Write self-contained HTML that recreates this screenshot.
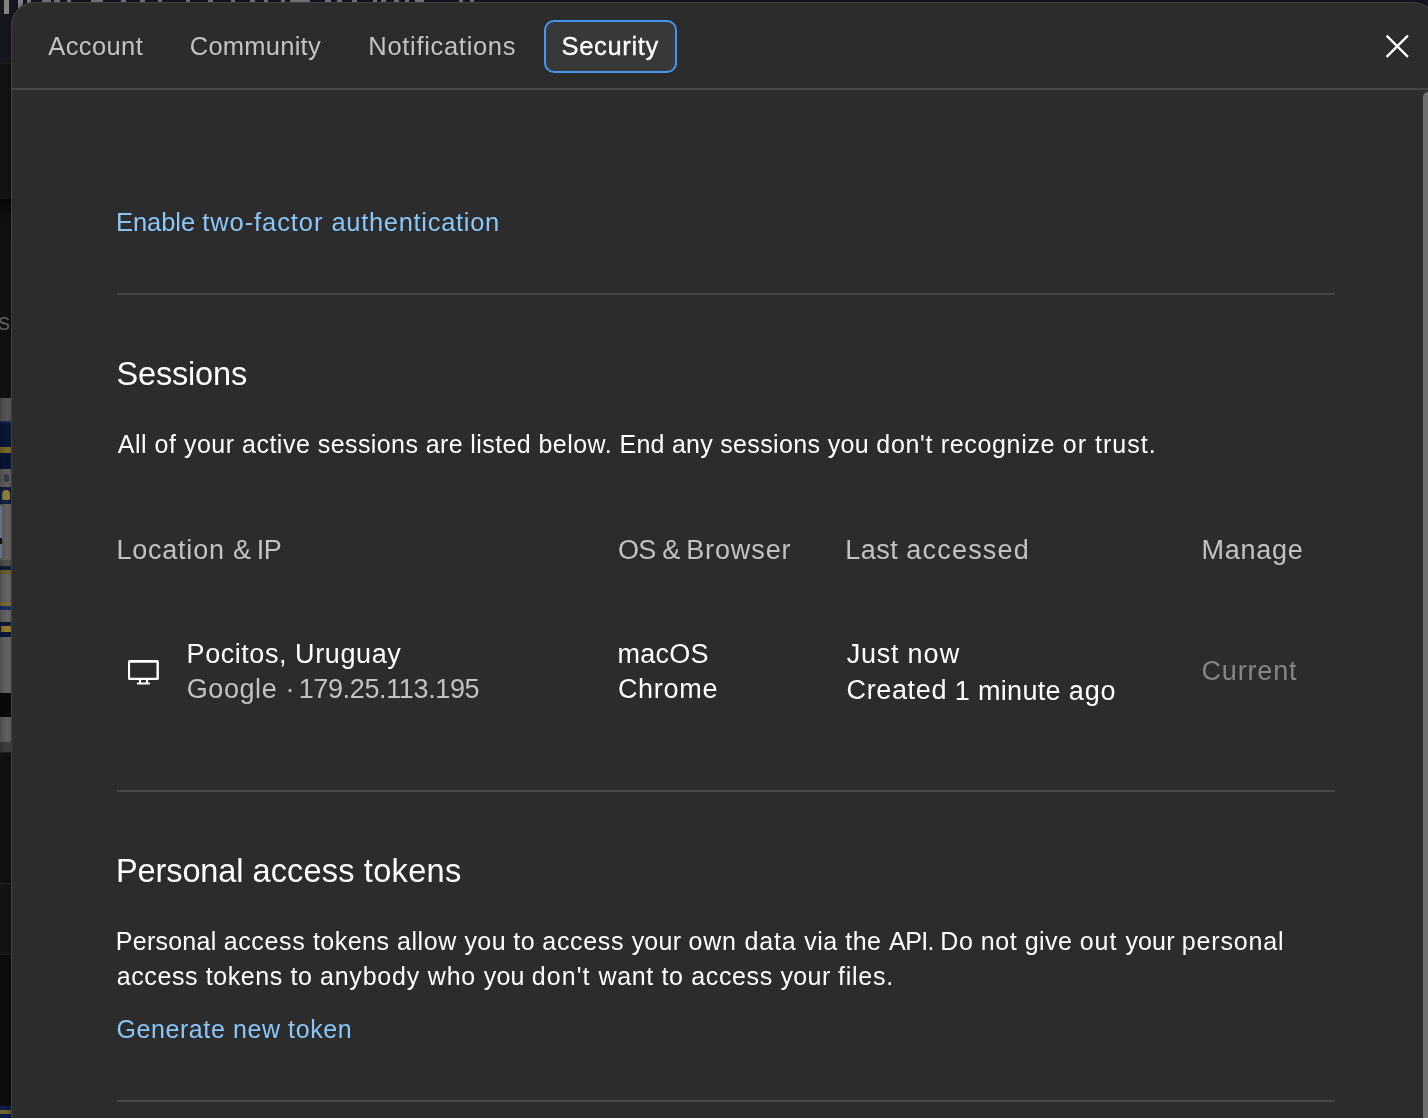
<!DOCTYPE html>
<html lang="en"><head><meta charset="utf-8"><title>Settings – Security</title>
<style>
html,body{margin:0;padding:0;background:#15161f;}
body{width:1428px;height:1118px;position:relative;overflow:hidden;font-family:"Liberation Sans", sans-serif;}
#txt{position:absolute;left:0;top:0;width:1428px;height:1118px;will-change:transform;}
.x{position:absolute;white-space:pre;line-height:1;font-kerning:normal;}
#strip{position:absolute;left:0;top:0;width:12px;height:1118px;overflow:hidden;}
#strip i{position:absolute;left:0;width:12px;display:block;}
#strip:after{content:"";position:absolute;left:0;top:398px;width:12px;height:354px;background:linear-gradient(90deg,rgba(0,0,0,.28),rgba(0,0,0,0) 80%);}
#topfr{position:absolute;left:0;top:0;width:1428px;height:16px;overflow:hidden;}
#topfr i{position:absolute;top:0;display:block;background:#838383;}
#sfrag{position:absolute;left:-1.8px;top:310.3px;font-size:24.5px;line-height:1;color:#5e5e5e;will-change:transform;}
#modal{position:absolute;left:11px;top:2px;width:1426px;height:1140px;background:#2c2c2c;border-radius:24px;box-shadow:0 0 0 1px #424242 inset,0 0 5px rgba(0,0,0,.45);}
.hr{position:absolute;height:2px;background:#464646;}
#tabsel{position:absolute;left:544px;top:20px;width:133px;height:53px;box-sizing:border-box;border:2px solid #4496f5;border-radius:10px;background:#383838;}
#thumb{position:absolute;left:1423px;top:92px;width:10px;height:1040px;background:#6f6f6f;border-radius:5px 0 0 0;}
svg{position:absolute;overflow:visible;}

</style></head>
<body>
<div id="strip">
<i style="top:0px;height:63px;background:#16171e"></i>
<i style="top:63px;height:1px;background:#202020"></i>
<i style="top:64px;height:134px;background:#121212"></i>
<i style="top:198px;height:1px;background:#181818"></i>
<i style="top:199px;height:199px;background:linear-gradient(#070707,#101010 18px,#111111 40px)"></i>
<i style="top:398px;height:23px;background:#5e5e5e"></i>
<i style="top:421px;height:2px;background:#1a2f60"></i>
<i style="top:423px;height:24px;background:#0b1a42"></i>
<i style="top:447px;height:6px;background:#87732a"></i>
<i style="top:453px;height:16px;background:#0a173d"></i>
<i style="top:469px;height:18px;background:#676767"></i>
<i style="top:487px;height:17px;background:#14224a"></i>
<i style="top:504px;height:56px;background:#6c6c6c"></i>
<i style="top:560px;height:6px;background:#5a5a5a"></i>
<i style="top:566px;height:4px;background:#12204a"></i>
<i style="top:570px;height:4px;background:#7a6a30"></i>
<i style="top:574px;height:28px;background:#707070"></i>
<i style="top:602px;height:4px;background:#857838"></i>
<i style="top:606px;height:4px;background:#1c3672"></i>
<i style="top:610px;height:12px;background:#6e6e6e"></i>
<i style="top:622px;height:15px;background:#0d1a44"></i>
<i style="top:637px;height:56px;background:#6d6d6d"></i>
<i style="top:693px;height:24px;background:#0b0b0b"></i>
<i style="top:717px;height:25px;background:#696969"></i>
<i style="top:742px;height:10px;background:#454545"></i>
<i style="top:752px;height:1px;background:#1c1c1c"></i>
<i style="top:753px;height:130px;background:#111111"></i>
<i style="top:883px;height:1px;background:#232323"></i>
<i style="top:884px;height:70px;background:#141414"></i>
<i style="top:954px;height:1px;background:#202020"></i>
<i style="top:955px;height:151px;background:#0c0c0c"></i>
<i style="top:1106px;height:12px;background:#0c1c44"></i>
<i style="top:626px;height:6px;left:1px;width:11px;background:#a88a2c"></i>
<i style="top:1110px;height:4px;left:0;width:12px;background:#6f6434"></i>
<i style="top:474px;height:8px;left:4px;width:5px;background:#3a3f55;border-radius:3px"></i>
<i style="top:490px;height:10px;left:2px;width:8px;background:#9b8a45;border-radius:5px 5px 2px 2px"></i>
<i style="top:506px;height:52px;left:0;width:2px;background:#8d9ab2"></i>
<i style="top:538px;height:6px;left:0;width:2px;background:#151515"></i>
</div>
<div id="topfr">
<i style="left:4.0px;width:4.9px;height:14px"></i>
<i style="left:18.0px;width:4.6px;height:14px"></i>
<i style="left:26.8px;width:4.7px;height:14px"></i>
<i style="left:42.0px;width:9.0px;height:2px"></i>
<i style="left:54.0px;width:6.0px;height:2px"></i>
<i style="left:67.0px;width:4.0px;height:2px"></i>
<i style="left:91.0px;width:12.0px;height:2px"></i>
<i style="left:121.0px;width:5.0px;height:2px"></i>
<i style="left:140.0px;width:5.0px;height:2px"></i>
<i style="left:158.0px;width:4.0px;height:2px"></i>
<i style="left:186.0px;width:4.0px;height:2px"></i>
<i style="left:208.0px;width:5.0px;height:2px"></i>
<i style="left:231.0px;width:4.0px;height:2px"></i>
<i style="left:250.0px;width:5.0px;height:2px"></i>
<i style="left:264.0px;width:3.5px;height:2px"></i>
<i style="left:280.6px;width:4.4px;height:2px"></i>
<i style="left:290.0px;width:19.5px;height:2px"></i>
<i style="left:325.0px;width:5.5px;height:2px"></i>
<i style="left:336.6px;width:5.4px;height:2px"></i>
<i style="left:352.0px;width:5.0px;height:2px"></i>
<i style="left:372.5px;width:4.5px;height:2px"></i>
<i style="left:381.0px;width:4.7px;height:2px"></i>
<i style="left:393.5px;width:5.5px;height:2px"></i>
<i style="left:405.0px;width:4.0px;height:2px"></i>
<i style="left:414.5px;width:9.5px;height:2px"></i>
<i style="left:459.0px;width:4.0px;height:2px"></i>
<i style="left:470.0px;width:4.0px;height:2px"></i>
</div>
<span id="sfrag">s</span>
<div id="modal"></div>
<div class="hr" style="left:11px;top:88px;width:1417px;"></div>
<div id="tabsel"></div>
<svg style="left:1385px;top:34px;" width="24" height="24" viewBox="0 0 24 24"><path d="M1.6 1.6 L22.9 22.9 M22.9 1.6 L1.6 22.9" stroke="#fff" stroke-width="2.3" stroke-linecap="butt" fill="none"/></svg>
<div id="thumb"></div>
<div class="hr" style="left:117px;top:293px;width:1218px;"></div>
<div class="hr" style="left:117px;top:790px;width:1218px;"></div>
<div class="hr" style="left:117px;top:1100px;width:1218px;"></div>
<svg style="left:126px;top:658px;" width="36" height="30" viewBox="126 658 36 30"><path fill="#fff" fill-rule="evenodd" d="M129.6 660.1 H157.3 Q158.9 660.1 158.9 661.7 V678.4 Q158.9 680 157.3 680 H129.6 Q128 680 128 678.4 V661.7 Q128 660.1 129.6 660.1 Z M130.1 662.7 V677.8 H156.5 V662.7 Z"/><path d="M140 680 V683.6 M147 680 V683.6" stroke="#fff" stroke-width="2.1" fill="none"/><path d="M137.8 683.6 H149.2" stroke="#fff" stroke-width="2" stroke-linecap="round" fill="none"/></svg>

<div id="txt">
<span class="x t_acc" style="left:48.25px;top:33.83px;font-size:25.5px;letter-spacing:0.399px;color:#c2c2c2;">Account</span>
<span class="x t_com" style="left:189.81px;top:33.83px;font-size:25.5px;letter-spacing:0.236px;color:#c2c2c2;">Community</span>
<span class="x t_not" style="left:368.31px;top:33.83px;font-size:25.5px;letter-spacing:0.692px;color:#c2c2c2;">Notifications</span>
<span class="x t_sec" style="left:561.54px;top:33.83px;font-size:25.5px;letter-spacing:0.669px;color:#ffffff;-webkit-text-stroke:0.3px #fff;">Security</span>
<span class="x l_2fa" style="left:115.91px;top:209.83px;font-size:25.5px;letter-spacing:-0.028px;color:#8ac6f9;">Enable </span>
<span class="x l_2fa" style="left:202.21px;top:209.83px;font-size:25.5px;letter-spacing:0.923px;color:#8ac6f9;">two-factor </span>
<span class="x l_2fa" style="left:331.42px;top:209.83px;font-size:25.5px;letter-spacing:0.696px;color:#8ac6f9;">authentication</span>
<span class="x h_ses" style="left:116.52px;top:357.85px;font-size:32.5px;letter-spacing:-0.175px;color:#ffffff;">Sessions</span>
<span class="x p_ses" style="left:117.85px;top:432.22px;font-size:25px;letter-spacing:0.505px;color:#ffffff;">All of your active </span>
<span class="x p_ses" style="left:317.80px;top:432.22px;font-size:25px;letter-spacing:0.404px;color:#ffffff;">sessions are listed </span>
<span class="x p_ses" style="left:538.49px;top:432.22px;font-size:25px;letter-spacing:0.460px;color:#ffffff;">below. </span>
<span class="x p_ses" style="left:619.55px;top:432.22px;font-size:25px;letter-spacing:0.246px;color:#ffffff;">End any </span>
<span class="x p_ses" style="left:720.20px;top:432.22px;font-size:25px;letter-spacing:0.360px;color:#ffffff;">sessions you </span>
<span class="x p_ses" style="left:876.35px;top:432.22px;font-size:25px;letter-spacing:0.667px;color:#ffffff;">don't recognize </span>
<span class="x p_ses" style="left:1062.75px;top:432.22px;font-size:25px;letter-spacing:1.023px;color:#ffffff;">or trust.</span>
<span class="x th_loc" style="left:116.39px;top:536.84px;font-size:27px;letter-spacing:0.786px;color:#c2c2c2;">Location </span>
<span class="x th_loc" style="left:233.05px;top:536.84px;font-size:27px;letter-spacing:-0.929px;color:#c2c2c2;">&amp; </span>
<span class="x th_loc" style="left:256.71px;top:536.84px;font-size:27px;letter-spacing:-0.500px;color:#c2c2c2;">IP</span>
<span class="x th_os" style="left:617.92px;top:537.05px;font-size:27px;letter-spacing:-0.762px;color:#c2c2c2;">OS </span>
<span class="x th_os" style="left:662.15px;top:537.05px;font-size:27px;letter-spacing:-0.741px;color:#c2c2c2;">&amp; </span>
<span class="x th_os" style="left:686.19px;top:537.05px;font-size:27px;letter-spacing:0.889px;color:#c2c2c2;">Browser</span>
<span class="x th_la" style="left:845.19px;top:536.84px;font-size:27px;letter-spacing:0.504px;color:#c2c2c2;">Last </span>
<span class="x th_la" style="left:906.25px;top:536.84px;font-size:27px;letter-spacing:1.216px;color:#c2c2c2;">accessed</span>
<span class="x th_mg" style="left:1201.59px;top:536.84px;font-size:27px;letter-spacing:0.727px;color:#c2c2c2;">Manage</span>
<span class="x c_poc" style="left:186.59px;top:640.52px;font-size:27px;letter-spacing:0.554px;color:#ffffff;">Pocitos, </span>
<span class="x c_poc" style="left:295.12px;top:640.52px;font-size:27px;letter-spacing:0.596px;color:#ffffff;">Uruguay</span>
<span class="x c_goo" style="left:186.74px;top:675.52px;font-size:27px;letter-spacing:0.582px;color:#c2c2c2;">Google </span>
<span class="x c_goo" style="left:285.40px;top:675.52px;font-size:27px;letter-spacing:-1.627px;color:#c2c2c2;">· </span>
<span class="x c_goo" style="left:298.64px;top:675.52px;font-size:27px;letter-spacing:-0.361px;color:#c2c2c2;">179.25.113.195</span>
<span class="x c_mac" style="left:617.51px;top:640.52px;font-size:27px;letter-spacing:0.250px;color:#ffffff;">macOS</span>
<span class="x c_chr" style="left:617.93px;top:675.52px;font-size:27px;letter-spacing:0.688px;color:#ffffff;">Chrome</span>
<span class="x c_jn" style="left:846.78px;top:640.52px;font-size:27px;letter-spacing:0.720px;color:#ffffff;">Just </span>
<span class="x c_jn" style="left:907.41px;top:640.52px;font-size:27px;letter-spacing:1.198px;color:#ffffff;">now</span>
<span class="x c_cr" style="left:846.53px;top:676.56px;font-size:27px;letter-spacing:0.641px;color:#ffffff;">Created</span>
<span class="x c_1m" style="left:954.84px;top:677.84px;font-size:27px;letter-spacing:0.316px;color:#ffffff;">1 minute </span>
<span class="x c_1m" style="left:1068.75px;top:677.84px;font-size:27px;letter-spacing:0.909px;color:#ffffff;">ago</span>
<span class="x c_cur" style="left:1201.53px;top:657.52px;font-size:27px;letter-spacing:0.823px;color:#868686;">Current</span>
<span class="x h_pat" style="left:115.93px;top:855.33px;font-size:32.5px;letter-spacing:-0.092px;color:#ffffff;">Personal </span>
<span class="x h_pat" style="left:252.42px;top:855.33px;font-size:32.5px;letter-spacing:0.172px;color:#ffffff;">access </span>
<span class="x h_pat" style="left:363.81px;top:855.33px;font-size:32.5px;letter-spacing:0.340px;color:#ffffff;">tokens</span>
<span class="x p_pat1" style="left:115.85px;top:929.22px;font-size:25px;letter-spacing:0.240px;color:#ffffff;">Personal </span>
<span class="x p_pat1" style="left:223.64px;top:929.22px;font-size:25px;letter-spacing:0.645px;color:#ffffff;">access </span>
<span class="x p_pat1" style="left:312.92px;top:929.22px;font-size:25px;letter-spacing:0.487px;color:#ffffff;">tokens </span>
<span class="x p_pat1" style="left:396.94px;top:929.22px;font-size:25px;letter-spacing:0.597px;color:#ffffff;">allow </span>
<span class="x p_pat1" style="left:464.44px;top:929.22px;font-size:25px;letter-spacing:0.405px;color:#ffffff;">you to </span>
<span class="x p_pat1" style="left:542.34px;top:929.22px;font-size:25px;letter-spacing:0.648px;color:#ffffff;">access </span>
<span class="x p_pat1" style="left:631.64px;top:929.22px;font-size:25px;letter-spacing:0.243px;color:#ffffff;">your </span>
<span class="x p_pat1" style="left:688.45px;top:929.22px;font-size:25px;letter-spacing:0.797px;color:#ffffff;">own </span>
<span class="x p_pat1" style="left:744.45px;top:929.22px;font-size:25px;letter-spacing:0.831px;color:#ffffff;">data </span>
<span class="x p_pat1" style="left:804.21px;top:929.22px;font-size:25px;letter-spacing:0.528px;color:#ffffff;">via the </span>
<span class="x p_pat1" style="left:889.05px;top:929.22px;font-size:25px;letter-spacing:-0.578px;color:#ffffff;">API. </span>
<span class="x p_pat1" style="left:940.35px;top:929.22px;font-size:25px;letter-spacing:0.542px;color:#ffffff;">Do not </span>
<span class="x p_pat1" style="left:1024.75px;top:929.22px;font-size:25px;letter-spacing:0.417px;color:#ffffff;">give </span>
<span class="x p_pat1" style="left:1079.65px;top:929.22px;font-size:25px;letter-spacing:1.021px;color:#ffffff;">out </span>
<span class="x p_pat1" style="left:1125.44px;top:929.22px;font-size:25px;letter-spacing:0.131px;color:#ffffff;">your </span>
<span class="x p_pat1" style="left:1181.69px;top:929.22px;font-size:25px;letter-spacing:0.868px;color:#ffffff;">personal</span>
<span class="x p_pat2" style="left:116.64px;top:964.19px;font-size:25px;letter-spacing:0.617px;color:#ffffff;">access </span>
<span class="x p_pat2" style="left:205.72px;top:964.19px;font-size:25px;letter-spacing:0.581px;color:#ffffff;">tokens to </span>
<span class="x p_pat2" style="left:319.94px;top:964.19px;font-size:25px;letter-spacing:0.804px;color:#ffffff;">anybody </span>
<span class="x p_pat2" style="left:427.84px;top:964.19px;font-size:25px;letter-spacing:0.772px;color:#ffffff;">who </span>
<span class="x p_pat2" style="left:483.74px;top:964.19px;font-size:25px;letter-spacing:0.211px;color:#ffffff;">you </span>
<span class="x p_pat2" style="left:531.85px;top:964.19px;font-size:25px;letter-spacing:1.033px;color:#ffffff;">don't </span>
<span class="x p_pat2" style="left:598.44px;top:964.19px;font-size:25px;letter-spacing:0.655px;color:#ffffff;">want to </span>
<span class="x p_pat2" style="left:691.24px;top:964.19px;font-size:25px;letter-spacing:0.634px;color:#ffffff;">access </span>
<span class="x p_pat2" style="left:780.44px;top:964.19px;font-size:25px;letter-spacing:0.383px;color:#ffffff;">your </span>
<span class="x p_pat2" style="left:837.95px;top:964.19px;font-size:25px;letter-spacing:0.746px;color:#ffffff;">files.</span>
<span class="x l_gen" style="left:116.44px;top:1017.22px;font-size:25px;letter-spacing:0.590px;color:#8ac6f9;">Generate new token</span>
</div>
</body></html>
